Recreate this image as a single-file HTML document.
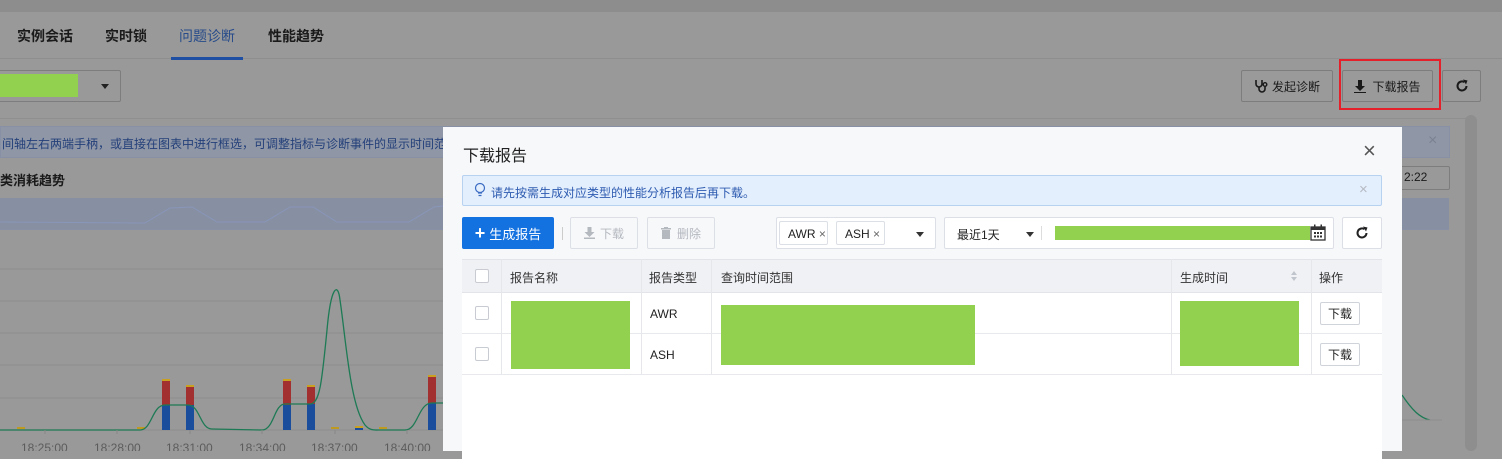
<!DOCTYPE html>
<html><head><meta charset="utf-8"><style>
*{box-sizing:border-box;margin:0;padding:0}
body{width:1502px;height:451px;overflow:hidden;background:#999;font-family:"Liberation Sans","Noto Sans CJK SC",sans-serif;font-size:12px;color:#222;position:relative}
.a{position:absolute}
.btn{position:absolute;border:1px solid #7d7d7d;border-radius:2px;background:#9a9a9a;display:flex;align-items:center;justify-content:center;font-size:12px;color:#1a1a1a}
.m{position:absolute;left:443px;top:127px;width:959px;height:324px;background:#f7f8fa}
.mb{position:absolute;border:1px solid #dcdfe6;border-radius:2px;background:#fff;display:flex;align-items:center}
.g{background:#92d050;position:absolute}
.cb{position:absolute;width:14px;height:14px;border:1px solid #c8cbd2;border-radius:2px;background:#fff}
.tab{position:absolute;top:26px;font-size:14px;font-weight:bold;color:#1a1a1a}
</style></head><body>
<div class="a" style="left:0;top:0;width:1502px;height:12px;background:#8d8d8d"></div>
<div class="a" style="left:0;top:12px;width:1502px;height:47px;border-bottom:1px solid #8e8e8e"></div>
<div class="tab" style="left:17px">实例会话</div>
<div class="tab" style="left:105px">实时锁</div>
<div class="tab" style="left:179px;font-weight:normal;color:#274b8a">问题诊断</div>
<div class="a" style="left:171px;top:57px;width:72px;height:3px;background:#1e4fa3"></div>
<div class="tab" style="left:268px">性能趋势</div>
<div class="a" style="left:0;top:70px;width:121px;height:32px;border:1px solid #7d7d7d;border-left:none;border-radius:0 2px 2px 0"></div>
<div class="a" style="left:0;top:74px;width:78px;height:23px;background:#92d050"></div>
<div class="a" style="left:101px;top:84px;border:4px solid transparent;border-top:5px solid #222"></div>
<div class="a" style="left:0;top:118px;width:1475px;height:1px;background:#8f8f8f"></div>
<div class="a" style="left:1465px;top:115px;width:12px;height:336px;background:#8e8e8e;border-radius:6px"></div>
<div class="a" style="left:0;top:126px;width:1450px;height:32px;background:#8f96a6;border:1px solid #8790a4"></div>
<div class="a" style="left:2px;top:135px;font-size:12px;color:#24407a;white-space:nowrap">间轴左右两端手柄，或直接在图表中进行框选，可调整指标与诊断事件的显示时间范围</div>
<div class="a" style="left:1428px;top:132px;color:#7b8290;font-size:16px">×</div>
<div class="a" style="left:0;top:170px;font-size:13px;font-weight:bold;color:#1a1a1a">类消耗趋势</div>
<div class="a" style="left:1400px;top:166px;width:50px;height:24px;border:1px solid #7d7d7d;border-radius:2px"></div>
<div class="a" style="left:1404px;top:170px;font-size:12px;color:#1a1a1a">2:22</div>
<div class="a" style="left:0;top:198px;width:1449px;height:32px;background:#878fa3;border-bottom:1px solid #8790a4"></div>
<svg class="a" style="left:0;top:0" width="443" height="451">
<polyline fill="none" stroke="#8896b8" stroke-width="1" points="0,222 145,223 170,208 192,207 217,222 265,222 290,207 313,207 337,222 409,222 434,207 443,206"/>
<g stroke="#8d8d8d" stroke-width="1"><line x1="0" y1="269" x2="443" y2="269"/><line x1="0" y1="301" x2="443" y2="301"/><line x1="0" y1="333" x2="443" y2="333"/><line x1="0" y1="365" x2="443" y2="365"/><line x1="0" y1="398" x2="443" y2="398"/><line x1="0" y1="430" x2="443" y2="430"/></g>
<g fill="#bf9a20"><rect x="17" y="427" width="8" height="2"/><rect x="137" y="427" width="8" height="2"/><rect x="331" y="427" width="8" height="2"/><rect x="379" y="427" width="8" height="2"/></g>
<rect x="162" y="381" width="8" height="25" fill="#a33030"/><rect x="162" y="379" width="8" height="2" fill="#c9a020"/><rect x="162" y="405" width="8" height="25" fill="#1a4d9c"/>
<rect x="186" y="387" width="8" height="18" fill="#a33030"/><rect x="186" y="385" width="8" height="2" fill="#c9a020"/><rect x="186" y="405" width="8" height="25" fill="#1a4d9c"/>
<rect x="283" y="381" width="8" height="24" fill="#a33030"/><rect x="283" y="379" width="8" height="2" fill="#c9a020"/><rect x="283" y="405" width="8" height="25" fill="#1a4d9c"/>
<rect x="307" y="387" width="8" height="18" fill="#a33030"/><rect x="307" y="385" width="8" height="2" fill="#c9a020"/><rect x="307" y="404" width="8" height="26" fill="#1a4d9c"/>
<rect x="428" y="377" width="8" height="26" fill="#a33030"/><rect x="428" y="375" width="8" height="2" fill="#c9a020"/><rect x="428" y="403" width="8" height="27" fill="#1a4d9c"/>
<rect x="355" y="426" width="8" height="2" fill="#c9a020"/><rect x="355" y="428" width="8" height="2" fill="#1a4d9c"/>
<path fill="none" stroke="#1d7a55" stroke-width="1.3" d="M0,430 L140,430 C152,430 152,405 165,405 L188,405 C200,405 200,429 212,429 L262,430 C274,430 274,404 285,404 L310,404 C320,404 322,380 327,330 C331,285 338,282 340,300 C346,340 350,405 365,425 C370,431 375,430 380,430 L405,430 C418,430 418,403 432,403 L443,403"/>
<g stroke="#888"><line x1="45" y1="430" x2="45" y2="434"/><line x1="117" y1="430" x2="117" y2="434"/><line x1="190" y1="430" x2="190" y2="434"/><line x1="262" y1="430" x2="262" y2="434"/><line x1="335" y1="430" x2="335" y2="434"/><line x1="407" y1="430" x2="407" y2="434"/></g>
<g fill="#5c5c5c" font-size="12" font-family="Liberation Sans"><text x="21" y="452">18:25:00</text><text x="94" y="452">18:28:00</text><text x="166" y="452">18:31:00</text><text x="239" y="452">18:34:00</text><text x="311" y="452">18:37:00</text><text x="384" y="452">18:40:00</text></g>
</svg>
<svg class="a" style="left:1402px;top:380px" width="40" height="50"><path d="M0,15 C10,30 18,38 28,40" fill="none" stroke="#1d7a55" stroke-width="1.3"/><line x1="0" y1="40" x2="40" y2="40" stroke="#8d8d8d"/></svg>
<div class="btn" style="left:1241px;top:70px;width:92px;height:32px"><svg width="14" height="15" style="margin-right:4px" viewBox="0 0 14 15"><path d="M2,1v4a3,3 0 0 0 6,0v-4" fill="none" stroke="#1a1a1a" stroke-width="1.6"/><path d="M5,8v2a3,3 0 0 0 6,0v-3" fill="none" stroke="#1a1a1a" stroke-width="1.6"/><circle cx="11" cy="5.5" r="1.8" fill="none" stroke="#1a1a1a" stroke-width="1.4"/></svg>发起诊断</div>
<div class="btn" style="left:1342px;top:70px;width:91px;height:32px"><svg width="12" height="13" style="margin-right:6px"><path d="M4,0h4v6h3l-5,5l-5-5h3z M0,12h12v1.5H0z" fill="#1a1a1a"/></svg>下载报告</div>
<div class="a" style="left:1339px;top:59px;width:102px;height:51px;border:2px solid #e5202a"></div>
<div class="btn" style="left:1442px;top:70px;width:39px;height:32px"><svg width="14" height="14" viewBox="0 0 14 14"><path d="M11.5,7A4.5,4.5 0 1 1 9.5,3.2" fill="none" stroke="#1a1a1a" stroke-width="2"/><path d="M8,0.5L12.5,1.5L11,5.5z" fill="#1a1a1a"/></svg></div>

<div class="m">
<div class="a" style="left:20px;top:15px;font-size:16px;color:#222">下载报告</div>
<div class="a" style="left:920px;top:11px;font-size:22px;color:#555;font-weight:300">×</div>
<div class="a" style="left:19px;top:48px;width:920px;height:31px;background:#e4effd;border:1px solid #b7d1f1;border-radius:2px"></div>
<svg class="a" style="left:31px;top:55px" width="12" height="16"><circle cx="6" cy="6" r="4.5" fill="none" stroke="#3b6cc2" stroke-width="1.2"/><path d="M4,11h4M4.5,13.5h3" stroke="#3b6cc2" stroke-width="1.2"/></svg>
<div class="a" style="left:48px;top:57px;font-size:12px;color:#2d5bb0">请先按需生成对应类型的性能分析报告后再下载。</div>
<div class="a" style="left:916px;top:54px;font-size:15px;color:#b5bac3">×</div>
<div class="a" style="left:19px;top:90px;width:92px;height:32px;background:#1472e0;border-radius:2px;color:#fff;font-size:13px;display:flex;align-items:center;justify-content:center"><b style="font-size:18px;margin-right:4px;line-height:1">+</b>生成报告</div>
<div class="a" style="left:119px;top:100px;width:1px;height:13px;background:#ccc"></div>
<div class="mb" style="left:127px;top:90px;width:68px;height:32px;justify-content:center;color:#b4b8bf;background:#f7f8fa;font-size:12px"><svg width="11" height="12" style="margin-right:5px"><path d="M3.5,0h4v5h3l-5,5l-5-5h3z M0,10.5h11v1.5H0z" fill="#b4b8bf"/></svg>下载</div>
<div class="mb" style="left:204px;top:90px;width:68px;height:32px;justify-content:center;color:#b4b8bf;background:#f7f8fa;font-size:12px"><svg width="10" height="12" style="margin-right:6px"><path d="M0,1h10v1.5H0z M3,0h4v1.5H3z M1,3h8v9H1z" fill="#b4b8bf"/></svg>删除</div>
<div class="mb" style="left:333px;top:90px;width:160px;height:32px"></div>
<div class="a" style="left:336px;top:94px;width:49px;height:24px;border:1px solid #dcdfe6;border-radius:2px;background:#fff;font-size:12px;padding:5px 0 0 8px">AWR <span style="color:#666">×</span></div>
<div class="a" style="left:393px;top:94px;width:49px;height:24px;border:1px solid #dcdfe6;border-radius:2px;background:#fff;font-size:12px;padding:5px 0 0 8px">ASH <span style="color:#666">×</span></div>
<div class="a" style="left:473px;top:105px;border:4px solid transparent;border-top:5px solid #333"></div>
<div class="mb" style="left:501px;top:90px;width:390px;height:32px"></div>
<div class="a" style="left:514px;top:99px;font-size:12px">最近1天</div>
<div class="a" style="left:583px;top:105px;border:4px solid transparent;border-top:5px solid #333"></div>
<div class="a" style="left:598px;top:99px;width:1px;height:14px;background:#ddd"></div>
<div class="g" style="left:612px;top:99px;width:255px;height:14px"></div>
<svg class="a" style="left:867px;top:97px" width="16" height="17"><rect x="1" y="3" width="14" height="13" fill="none" stroke="#333" stroke-width="1.3"/><rect x="1" y="3" width="14" height="3" fill="#333"/><rect x="4" y="0.5" width="1.5" height="4" fill="#333"/><rect x="10.5" y="0.5" width="1.5" height="4" fill="#333"/><g fill="#333"><rect x="4" y="8" width="2" height="2"/><rect x="7" y="8" width="2" height="2"/><rect x="10" y="8" width="2" height="2"/><rect x="4" y="11.5" width="2" height="2"/><rect x="7" y="11.5" width="2" height="2"/><rect x="10" y="11.5" width="2" height="2"/></g></svg>
<div class="mb" style="left:899px;top:90px;width:40px;height:32px;justify-content:center"><svg width="14" height="14" viewBox="0 0 14 14"><path d="M11.5,7A4.5,4.5 0 1 1 9.5,3.2" fill="none" stroke="#222" stroke-width="2"/><path d="M8,0.5L12.5,1.5L11,5.5z" fill="#222"/></svg></div>
<div class="a" style="left:19px;top:132px;width:920px;height:200px;background:#fff"></div>
<div class="a" style="left:19px;top:132px;width:920px;height:34px;background:#f0f1f5;border-top:1px solid #e2e4ea;border-bottom:1px solid #e2e4ea"></div>
<div class="a" style="left:19px;top:206px;width:920px;height:1px;background:#e8e9ed"></div>
<div class="a" style="left:19px;top:247px;width:920px;height:1px;background:#e8e9ed"></div>
<div class="a" style="left:58px;top:132px;width:1px;height:116px;background:#e6e7eb"></div>
<div class="a" style="left:198px;top:132px;width:1px;height:116px;background:#e6e7eb"></div>
<div class="a" style="left:268px;top:132px;width:1px;height:116px;background:#e6e7eb"></div>
<div class="a" style="left:728px;top:132px;width:1px;height:116px;background:#e6e7eb"></div>
<div class="a" style="left:868px;top:132px;width:1px;height:116px;background:#e6e7eb"></div>
<div class="cb" style="left:32px;top:142px"></div>
<div class="cb" style="left:32px;top:179px"></div>
<div class="cb" style="left:32px;top:220px"></div>
<div class="a" style="left:67px;top:142px;font-size:12px;color:#333">报告名称</div>
<div class="a" style="left:206px;top:142px;font-size:12px;color:#333">报告类型</div>
<div class="a" style="left:278px;top:142px;font-size:12px;color:#333">查询时间范围</div>
<div class="a" style="left:737px;top:142px;font-size:12px;color:#333">生成时间</div>
<div class="a" style="left:848px;top:141px;width:0;border:3px solid transparent;border-bottom:4px solid #c0c4cc"></div>
<div class="a" style="left:848px;top:150px;width:0;border:3px solid transparent;border-top:4px solid #c0c4cc"></div>
<div class="a" style="left:876px;top:142px;font-size:12px;color:#333">操作</div>
<div class="g" style="left:68px;top:174px;width:119px;height:68px"></div>
<div class="a" style="left:207px;top:180px;font-size:12px">AWR</div>
<div class="a" style="left:207px;top:221px;font-size:12px">ASH</div>
<div class="g" style="left:278px;top:178px;width:254px;height:60px"></div>
<div class="g" style="left:737px;top:174px;width:119px;height:65px"></div>
<div class="a" style="left:877px;top:175px;width:40px;height:23px;border:1px solid #d0d3d9;border-radius:2px;background:#fff;font-size:12px;display:flex;align-items:center;justify-content:center">下载</div>
<div class="a" style="left:877px;top:216px;width:40px;height:23px;border:1px solid #d0d3d9;border-radius:2px;background:#fff;font-size:12px;display:flex;align-items:center;justify-content:center">下载</div>
</div>
</body></html>
